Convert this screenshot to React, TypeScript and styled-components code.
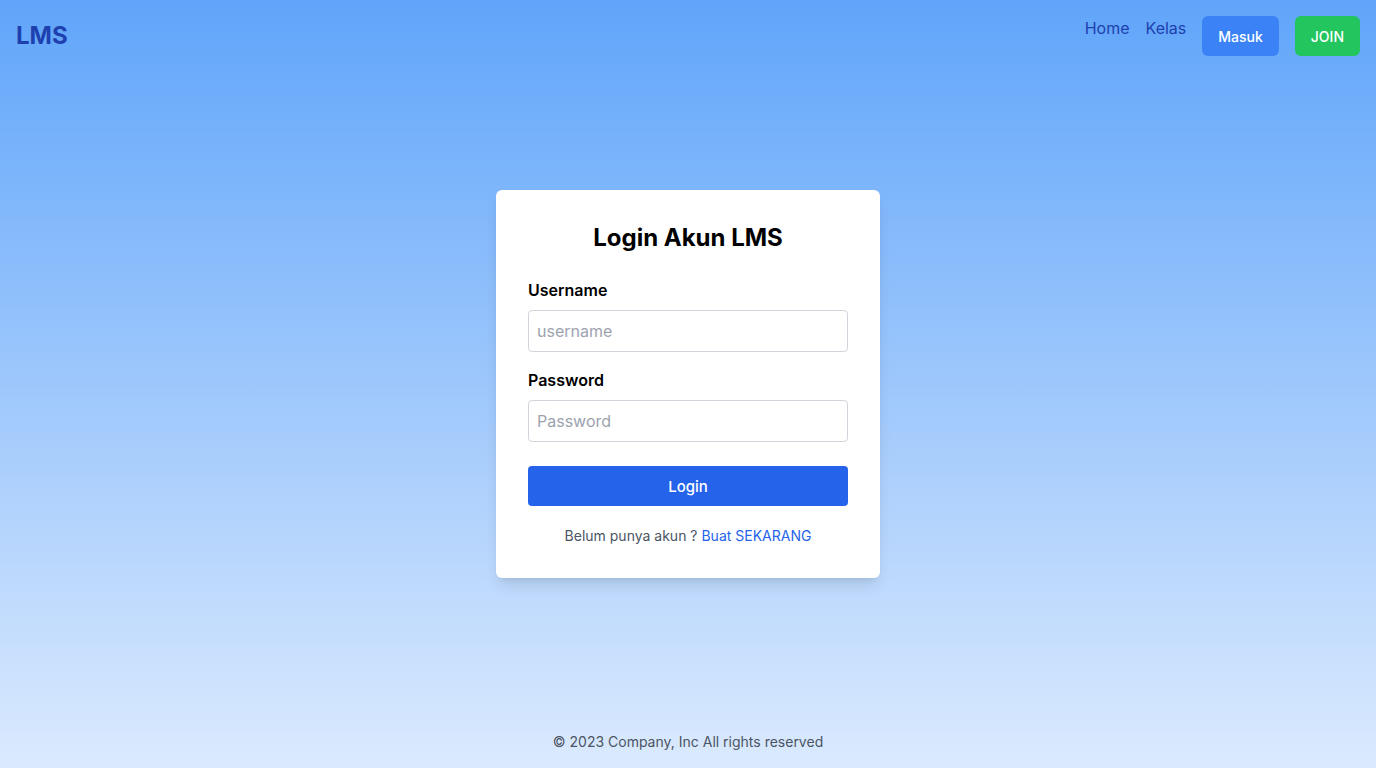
import React from "react";
import styled, { createGlobalStyle } from "styled-components";

const Global = createGlobalStyle`
  * { box-sizing: border-box; }
  html, body { margin: 0; padding: 0; }
  body {
    font-family: Inter, "Noto Sans", "Liberation Sans", sans-serif;
    -webkit-font-smoothing: antialiased;
  }
`;

const Page = styled.div`
  min-height: 100vh;
  display: grid;
  grid-template-rows: 1fr auto 1fr;
  background: linear-gradient(to bottom, #60a5fa 0%, #dbeafe 100%);
`;

const Header = styled.header`
  align-self: start;
  display: flex;
  align-items: center;
  justify-content: space-between;
  padding: 16px;
`;

const Logo = styled.div`
  font-size: 24px;
  line-height: 32px;
  font-weight: 700;
  color: #1e40af;
`;

const Nav = styled.nav`
  display: flex;
  align-items: flex-start;
  gap: 16px;
`;

const NavLink = styled.a`
  font-size: 16px;
  line-height: 24px;
  color: #1e40af;
  text-decoration: none;
`;

const NavButton = styled.a<{ $color: string }>`
  display: inline-flex;
  align-items: center;
  justify-content: center;
  height: 40px;
  padding: 0 16px;
  border-radius: 6px;
  background: ${(p) => p.$color};
  color: #ffffff;
  font-size: 14px;
  font-weight: 500;
  text-decoration: none;
`;

const Main = styled.main`
  display: flex;
  justify-content: center;
`;

const Card = styled.form`
  width: 384px;
  padding: 32px;
  background: #ffffff;
  border-radius: 6px;
  box-shadow: 0 10px 15px -3px rgba(0, 0, 0, 0.1), 0 4px 6px -4px rgba(0, 0, 0, 0.1);
`;

const Title = styled.h1`
  margin: 0 0 24px;
  text-align: center;
  font-size: 24px;
  line-height: 32px;
  font-weight: 700;
  color: #000000;
`;

const Field = styled.div<{ $mb: number }>`
  margin-bottom: ${(p) => p.$mb}px;
`;

const Label = styled.label`
  display: block;
  margin-bottom: 8px;
  font-size: 16px;
  line-height: 24px;
  font-weight: 600;
  color: #000000;
`;

const Input = styled.input`
  display: block;
  width: 100%;
  height: 42px;
  padding: 8px;
  border: 1px solid #d1d5db;
  border-radius: 4px;
  font-family: inherit;
  font-size: 16px;
  line-height: 24px;
  color: #111827;
  background: #ffffff;
  outline: none;
  &::placeholder { color: #9ca3af; }
`;

const SubmitButton = styled.button`
  display: block;
  width: 100%;
  height: 40px;
  border: none;
  border-radius: 4px;
  background: #2563eb;
  color: #ffffff;
  font-family: inherit;
  font-size: 15px;
  font-weight: 500;
  cursor: pointer;
`;

const Hint = styled.p`
  margin: 20px 0 0;
  text-align: center;
  font-size: 14px;
  line-height: 20px;
  color: #4b5563;
`;

const HintLink = styled.a`
  color: #2563eb;
  text-decoration: none;
`;

const Footer = styled.footer`
  align-self: end;
  padding: 16px;
  text-align: center;
  font-size: 14px;
  line-height: 20px;
  color: #4b5563;
`;

export default function App() {
  return (
    <>
      <Global />
      <Page>
        <Header>
          <Logo>LMS</Logo>
          <Nav>
            <NavLink href="#">Home</NavLink>
            <NavLink href="#">Kelas</NavLink>
            <NavButton href="#" $color="#3b82f6">Masuk</NavButton>
            <NavButton href="#" $color="#22c55e">JOIN</NavButton>
          </Nav>
        </Header>
        <Main>
          <Card onSubmit={(e) => e.preventDefault()}>
            <Title>Login Akun LMS</Title>
            <Field $mb={16}>
              <Label htmlFor="username">Username</Label>
              <Input id="username" type="text" placeholder="username" />
            </Field>
            <Field $mb={24}>
              <Label htmlFor="password">Password</Label>
              <Input id="password" type="password" placeholder="Password" />
            </Field>
            <SubmitButton type="submit">Login</SubmitButton>
            <Hint>
              Belum punya akun ? <HintLink href="#">Buat SEKARANG</HintLink>
            </Hint>
          </Card>
        </Main>
        <Footer>© 2023 Company, Inc All rights reserved</Footer>
      </Page>
    </>
  );
}
